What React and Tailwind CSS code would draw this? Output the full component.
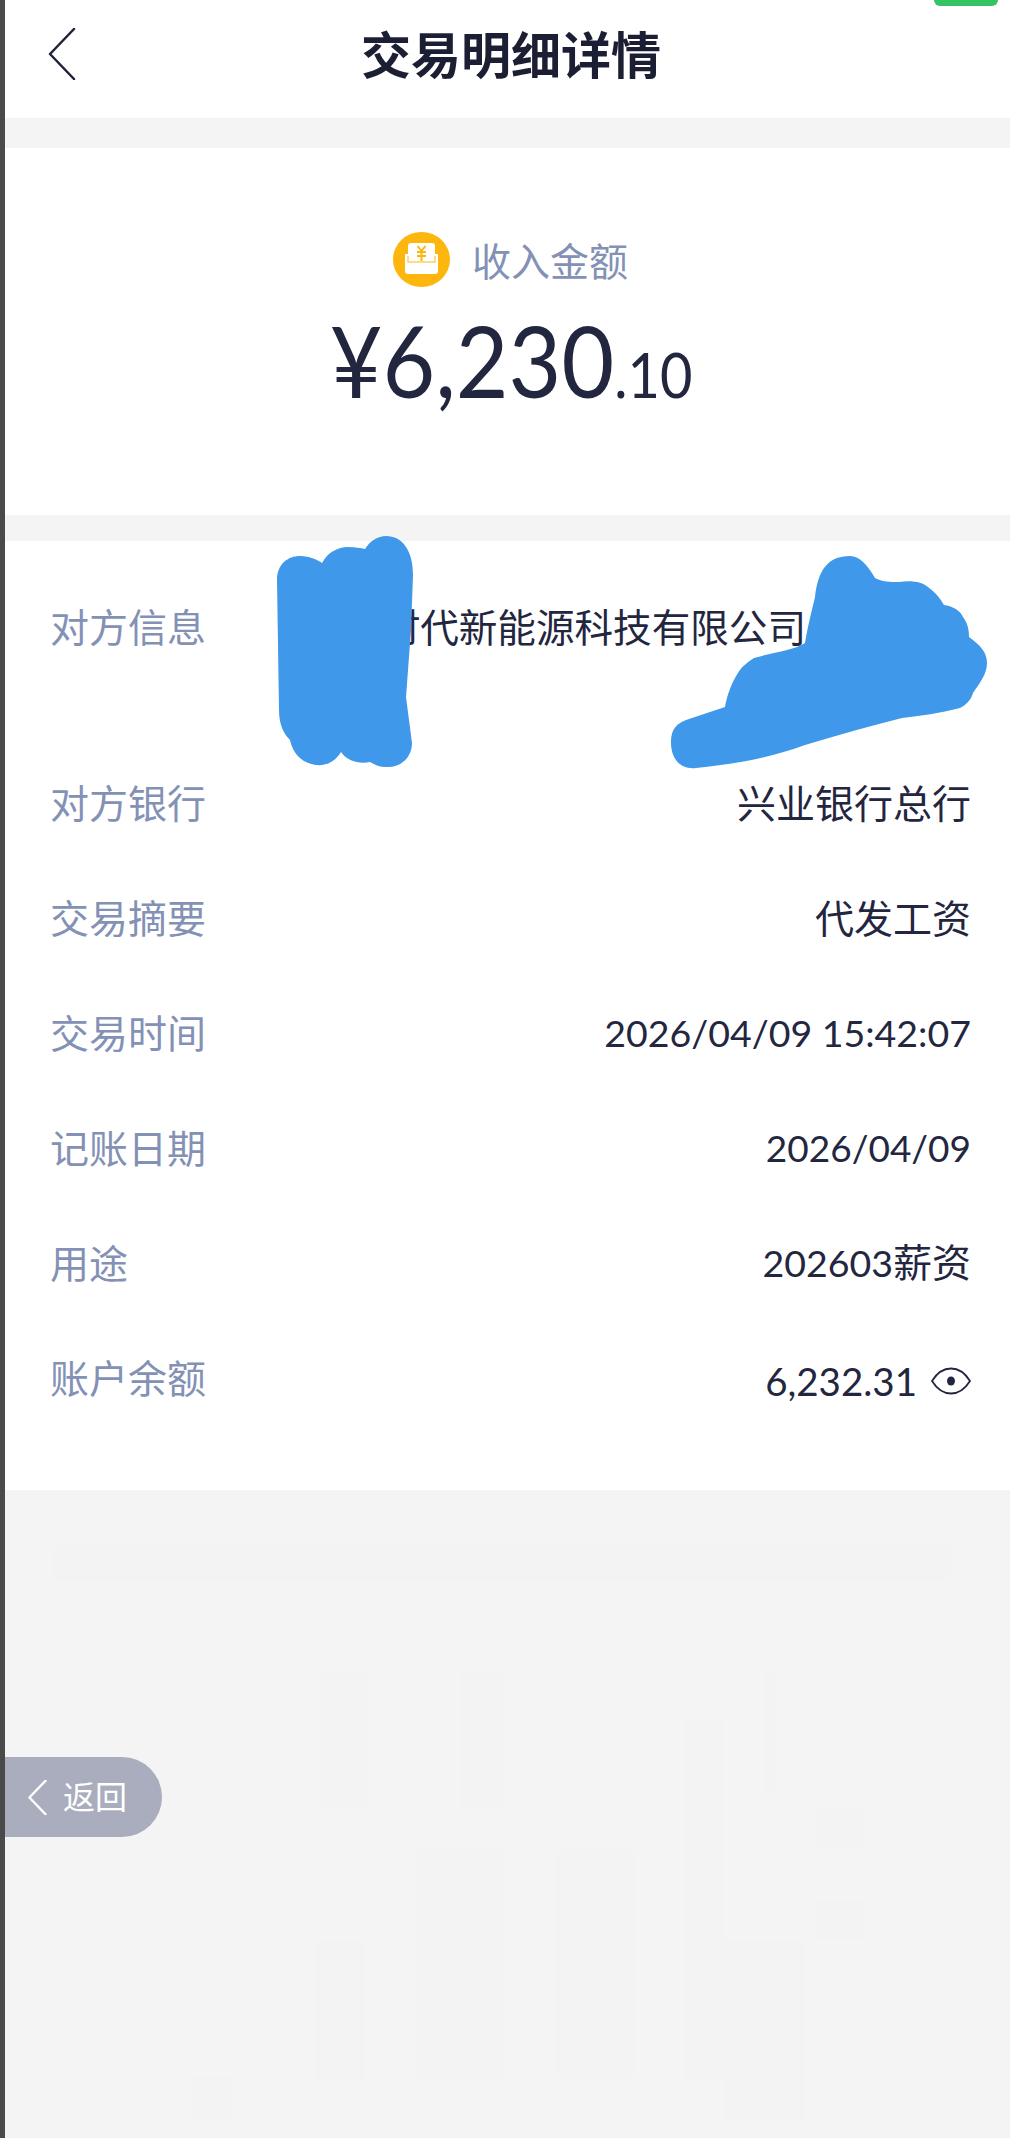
import React from 'react';

const cjk = 'font-["Lato","Noto_Sans_CJK_SC",sans-serif]';

const rows = [
    { label: '对方银行', value: '兴业银行总行' },
    { label: '交易摘要', value: '代发工资' },
    { label: '交易时间', value: <span className="text-[37.5px]">2026/04/09 15:42:07</span> },
    { label: '记账日期', value: <span className="text-[37px]">2026/04/09</span> },
    { label: '用途', value: <><span className="text-[37.5px]">202603</span>薪资</> },
];

// faint watermark blocks in the grey area, barely darker than the background
const marks = [
    [47, 56, 898, 35],
    [314, 182, 48, 136],
    [455, 182, 44, 136],
    [680, 230, 38, 270],
    [760, 182, 10, 120],
    [410, 360, 90, 228],
    [550, 360, 80, 228],
    [310, 450, 50, 140],
    [680, 450, 120, 140],
    [810, 320, 50, 40],
    [810, 410, 50, 40],
    [185, 587, 42, 44],
    [720, 587, 80, 44],
];

function Chevron({ className, color, width }) {
    return (
        <svg className={className} viewBox="0 0 28 52" fill="none">
            <polyline points="26,1 2,26 26,51" stroke={color} strokeWidth={width} strokeLinejoin="round" strokeLinecap="round" />
        </svg>
    );
}

function IncomeIcon() {
    return (
        <svg className="w-[57px] h-[55px] shrink-0" viewBox="0 0 57 55">
            <ellipse cx="28.5" cy="27.5" rx="28.5" ry="27.5" fill="#fdb60d" />
            <rect x="15" y="11" width="27" height="24" rx="3" fill="#ffffff" />
            <path d="M12 22 H45 V39 a3 3 0 0 1 -3 3 H15 a3 3 0 0 1 -3 -3 Z" fill="#fff" />
            <path d="M15 24 V30 H42 V24" fill="none" stroke="#fdd06a" strokeWidth="1.5" />
            <path d="M24.5 14 L28.5 19 L32.5 14 M24 20 H33 M24 24 H33 M28.5 19 V29" fill="none" stroke="#fdb60d" strokeWidth="2" />
        </svg>
    );
}

function EyeIcon() {
    return (
        <svg className="w-[40px] h-[28px] shrink-0" viewBox="0 0 40 28" fill="none">
            <path d="M1 14 C6 6 13 1.5 20 1.5 C27 1.5 34 6 39 14 C34 22 27 26.5 20 26.5 C13 26.5 6 22 1 14 Z" stroke="#23263f" strokeWidth="1.8" />
            <ellipse cx="20" cy="14" rx="4" ry="4.5" fill="#23263f" />
        </svg>
    );
}

export default function App() {
    return (
        <div className={`relative flex w-[1010px] h-[2138px] overflow-hidden bg-[#f4f4f4] ${cjk}`}>
            <div className="w-[5px] shrink-0 bg-[#4a4a4a]" />

            <div className="flex-1 flex flex-col min-w-0">
                <header className="relative h-[118px] shrink-0 bg-white flex items-center justify-center pl-[7px] pb-[8px]">
                    <Chevron className="absolute left-[43px] top-[28px] w-[28px] h-[52px]" color="#1f2238" width="2.5" />
                    <h1 className="text-[50px] leading-none font-bold text-[#1c1f33]">交易明细详情</h1>
                </header>

                <section className="mt-[30px] h-[367px] shrink-0 bg-white flex flex-col items-center pt-[84px]">
                    <div className="flex items-center gap-[22px] pl-[6px]">
                        <IncomeIcon />
                        <span className="text-[39px] leading-none text-[#8391b5] pt-[3px]">收入金额</span>
                    </div>
                    <div className="mt-[23px] flex items-baseline text-[#23263f] leading-none pl-[7px] scale-y-[1.09]">
                        <span className="text-[91px] leading-[100px]">¥6,230</span>
                        <span className="text-[56px] leading-none">.10</span>
                    </div>
                </section>

                <section className="mt-[26px] h-[949px] shrink-0 bg-white pl-[45px] pr-[39px] pt-[29px] text-[39px]">
                    <div className="h-[175px] flex items-start justify-between pt-[34px]">
                        <span className="leading-[46px] text-[#8391b5]">对方信息</span>
                        <span className="text-[38.6px] leading-[46px] text-[#23263f] mr-[165px]">时代新能源科技有限公司</span>
                    </div>
                    {rows.map((row) => (
                        <div key={row.label} className="h-[115px] flex items-center justify-between">
                            <span className="leading-[46px] text-[#8391b5]">{row.label}</span>
                            <span className="leading-[46px] text-[#23263f]">{row.value}</span>
                        </div>
                    ))}
                    <div className="h-[115px] flex items-center justify-between">
                        <span className="leading-[46px] text-[#8391b5]">账户余额</span>
                        <span className="flex items-center gap-[14px] pt-[6px] text-[38.5px] leading-[46px] text-[#23263f]">
                            6,232.31
                            <EyeIcon />
                        </span>
                    </div>
                </section>

                <div className="relative flex-1">
                    <svg className="absolute left-0 top-0 w-full h-full" viewBox="0 0 1005 648" preserveAspectRatio="none">
                        {marks.map((m, i) => (
                            <rect key={i} x={m[0]} y={m[1]} width={m[2]} height={m[3]} fill="#f3f3f3" />
                        ))}
                    </svg>
                </div>
            </div>

            {/* green tab cut off by the top edge */}
            <div className="absolute left-[934px] top-0 w-[64px] h-[6px] rounded-b-[6px] bg-[#34c463]" />

            {/* marker scribbles over the redacted name */}
            <svg className="absolute left-0 top-[530px] w-[1010px] h-[245px]" viewBox="0 0 1010 245" fill="#3f98e9">
                <path d="M277 50 C277 34 288 26 300 26 C310 26 318 30 322 33 C328 22 338 17 348 17 C355 17 361 18 365 19 C370 11 378 6 386 6 C402 6 413 20 413 45 L411 100 L406 167 L412 213 C412 228 400 238 386 237 C380 237 375 235 370 232 C360 234 348 232 341 222 C335 232 326 236 316 235 C302 233 293 224 290 210 C284 204 279 195 279 180 Z" />
                <path d="M671 213 C671 198 677 194 686 190 L725 177 C727 165 732 152 738 143 C742 136 748 132 754 128 C775 122 795 120 805 113 C808 95 812 80 815 67 C818 40 828 26 850 26 C860 26 868 36 875 48 C882 52 890 52 899 52 C912 50 922 52 928 57 C935 62 940 68 944 75 C952 76 960 80 963 87 C968 94 969 100 969 107 C980 115 987 122 987 133 C987 145 978 155 973 163 C971 170 966 175 960 178 C940 183 920 186 902 188 C870 196 838 205 805 215 C770 228 735 234 696 238 C680 240 671 228 671 213 Z" />
            </svg>

            {/* floating return tab */}
            <div className="absolute left-[5px] top-[1757px] w-[157px] h-[80px] rounded-r-[40px] bg-[#a9adbd] flex items-center pl-[23px] gap-[16px]">
                <Chevron className="w-[19px] h-[35px]" color="#ffffff" width="3.5" />
                <span className="text-[32px] leading-none text-white">返回</span>
            </div>
        </div>
    );
}
